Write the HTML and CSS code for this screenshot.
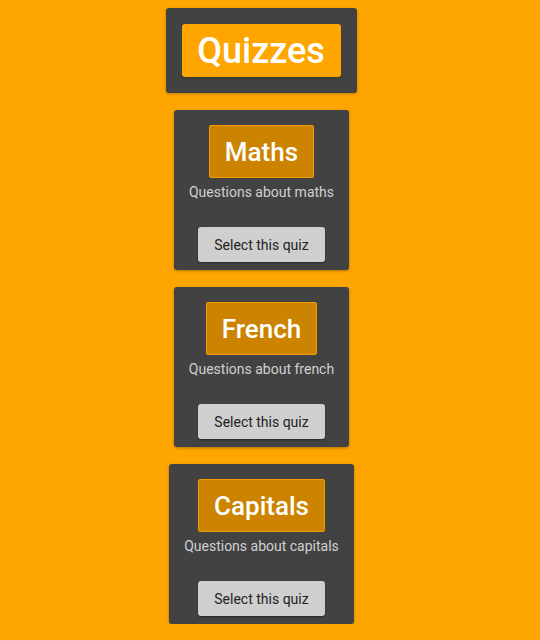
FILE: index.html
```html
<!DOCTYPE html>
<html>
<head>
<meta charset="utf-8">
<link rel="stylesheet" href="styles.css">
</head>
<body>
<div class="page">
  <header class="header">
    <h1 class="header-title">Quizzes</h1>
  </header>
  <div class="card">
    <h2 class="card-title">Maths</h2>
    <p class="card-desc">Questions about maths</p>
    <button class="card-btn">Select this quiz</button>
  </div>
  <div class="card">
    <h2 class="card-title">French</h2>
    <p class="card-desc">Questions about french</p>
    <button class="card-btn">Select this quiz</button>
  </div>
  <div class="card">
    <h2 class="card-title">Capitals</h2>
    <p class="card-desc">Questions about capitals</p>
    <button class="card-btn">Select this quiz</button>
  </div>
</div>
</body>
</html>
```
FILE: styles.css
```css
html, body {
  margin: 0;
  padding: 0;
  background: #ffa500;
  font-family: Roboto, "Liberation Sans", sans-serif;
}
.page {
  display: flex;
  flex-direction: column;
  align-items: center;
  gap: 17px;
  padding-top: 8px;
  margin-right: 17px;
}
.header {
  background: #424242;
  border-radius: 3px;
  padding: 16px;
  box-shadow: 0 1px 3px rgba(0,0,0,0.25);
}
.header-title {
  margin: 0;
  background: #ffa500;
  color: #fff;
  font-size: 36px;
  font-weight: 500;
  height: 53px;
  line-height: 54px;
  padding: 0 16px 0 15px;
  border-radius: 3px;
  box-shadow: 0 1px 2px rgba(0,0,0,0.2);
}
.card {
  background: #424242;
  border-radius: 3px;
  padding: 15px 15px 8px;
  display: flex;
  flex-direction: column;
  align-items: center;
  box-shadow: 0 1px 3px rgba(0,0,0,0.3);
}
.card-title {
  margin: 0;
  background: #cc8400;
  border: 1px solid #f09c00;
  border-radius: 2px;
  color: #fff;
  font-size: 26px;
  font-weight: 500;
  height: 51px;
  line-height: 53px;
  padding: 0 15px;
}
.card-desc {
  margin: 5px 0 0;
  color: #d0d0d0;
  font-size: 14px;
  line-height: 18px;
}
.card-btn {
  margin-top: 26px;
  width: 127px;
  height: 35px;
  background: #cfcfcf;
  border: none;
  border-radius: 3px;
  color: #222;
  font-family: Roboto, "Liberation Sans", sans-serif;
  font-size: 14px;
  box-shadow: 0 1px 2px rgba(0,0,0,0.4);
  padding: 0;
}
```
